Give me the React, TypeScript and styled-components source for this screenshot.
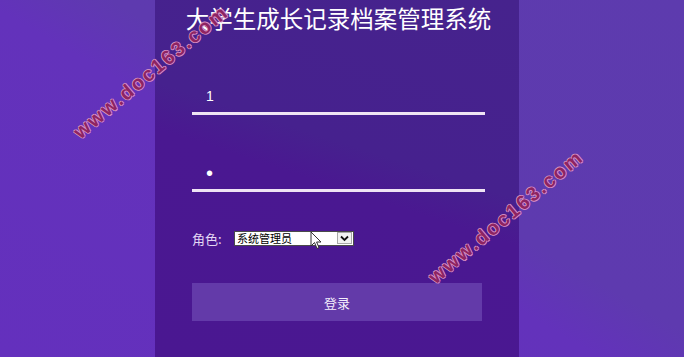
import React from 'react';
import styled, { createGlobalStyle } from 'styled-components';

const GlobalStyle = createGlobalStyle`
  html, body {
    margin: 0;
    padding: 0;
    height: 357px;
    overflow: hidden;
  }
  body {
    font-family: "Liberation Sans", "Noto Sans CJK SC", sans-serif;
  }
`;

const Page = styled.div`
  position: relative;
  height: 357px;
  display: flex;
  justify-content: center;
  overflow: hidden;
  background: linear-gradient(210deg, #5d3bae 0%, #5e3aaf 44%, #6332bb 54%, #6430bd 100%);
`;

const Panel = styled.div`
  width: 364px;
  margin-right: 10px;
  box-sizing: border-box;
  padding: 6px 34px 0 37px;
  display: flex;
  flex-direction: column;
  background: linear-gradient(198deg, #46238d 0%, #46218e 42%, #4a1891 52%, #4a1791 100%);
`;

const Title = styled.h1`
  margin: 0 -37px 0 -37px;
  text-align: center;
  font-family: "Liberation Serif", "Noto Sans CJK SC", serif;
  font-weight: normal;
  font-size: 23.5px;
  line-height: 28px;
  color: #ffffff;
`;

const Field = styled.input<{ $top: number; $size: number }>`
  display: block;
  margin: ${p => p.$top}px 0 0 0;
  width: 279px;
  height: 32px;
  box-sizing: content-box;
  padding: 0 0 0 14px;
  border: none;
  border-bottom: 3px solid #efe4f4;
  background: transparent;
  color: #ffffff;
  font-family: "Liberation Sans", sans-serif;
  font-size: ${p => p.$size}px;
  outline: none;
`;

const RoleRow = styled.div`
  position: relative;
  margin-top: 38px;
  display: flex;
  align-items: center;
  height: 16px;
`;

const RoleLabel = styled.span`
  width: 42px;
  font-size: 13px;
  color: #e4d8f4;
  font-family: "Noto Sans CJK SC", sans-serif;
`;

const SelectBox = styled.div`
  width: 120px;
  height: 15px;
  box-sizing: border-box;
  border: 1px solid #4a4a4a;
  background: #ffffff;
  display: flex;
  align-items: center;
  justify-content: space-between;
  padding-left: 2px;
`;

const SelectText = styled.span`
  font-size: 11px;
  line-height: 13px;
  color: #000000;
  font-family: "Noto Sans CJK SC", sans-serif;
`;

const ArrowBox = styled.span`
  width: 15px;
  height: 12px;
  margin-right: 1px;
  box-sizing: border-box;
  border: 1px solid #a8a8a8;
  background: #f2f2f2;
  display: flex;
  align-items: center;
  justify-content: center;
`;

const Cursor = styled.svg`
  position: absolute;
  left: 118px;
  top: 1px;
`;

const LoginButton = styled.button`
  margin-top: 37px;
  width: 290px;
  height: 38px;
  border: none;
  background: #633aa9;
  color: #f4eefc;
  font-size: 13px;
  font-family: "Noto Sans CJK SC", sans-serif;
`;

const Watermark = styled.div<{ $x: number; $y: number }>`
  position: absolute;
  left: ${p => p.$x}px;
  top: ${p => p.$y}px;
  transform: translate(-50%, -50%) rotate(-40deg);
  white-space: nowrap;
  font-family: "Liberation Sans", sans-serif;
  font-weight: bold;
  font-size: 20px;
  letter-spacing: 2px;
  color: #8e2462;
  text-shadow: 1px 0 0 #d98fc4, -1px 0 0 #d98fc4, 0 1px 0 #d98fc4, 0 -1px 0 #d98fc4;
  pointer-events: none;
`;

const App: React.FC = () => {
  return (
    <Page>
      <GlobalStyle />
      <Panel>
        <Title>大学生成长记录档案管理系统</Title>
        <Field $top={46} $size={14} type="text" defaultValue="1" />
        <Field $top={42} $size={20} type="password" defaultValue="1" />
        <RoleRow>
          <RoleLabel>角色:</RoleLabel>
          <SelectBox>
            <SelectText>系统管理员</SelectText>
            <ArrowBox>
              <svg width="9" height="7" viewBox="0 0 9 7">
                <path d="M1 1.5 L4.5 5 L8 1.5" stroke="#111" strokeWidth="1.8" fill="none" />
              </svg>
            </ArrowBox>
          </SelectBox>
          <Cursor width="12" height="19" viewBox="0 0 12 19">
            <path d="M1 1 L1 15 L4.5 11.5 L7 17.5 L9 16.6 L6.6 11 L11 11 Z" fill="#ffffff" stroke="#333" strokeWidth="1" strokeLinejoin="round" />
          </Cursor>
        </RoleRow>
        <LoginButton>登录</LoginButton>
      </Panel>
      <Watermark $x={151} $y={72}>www.doc163.com</Watermark>
      <Watermark $x={506} $y={217}>www.doc163.com</Watermark>
    </Page>
  );
};

export default App;
